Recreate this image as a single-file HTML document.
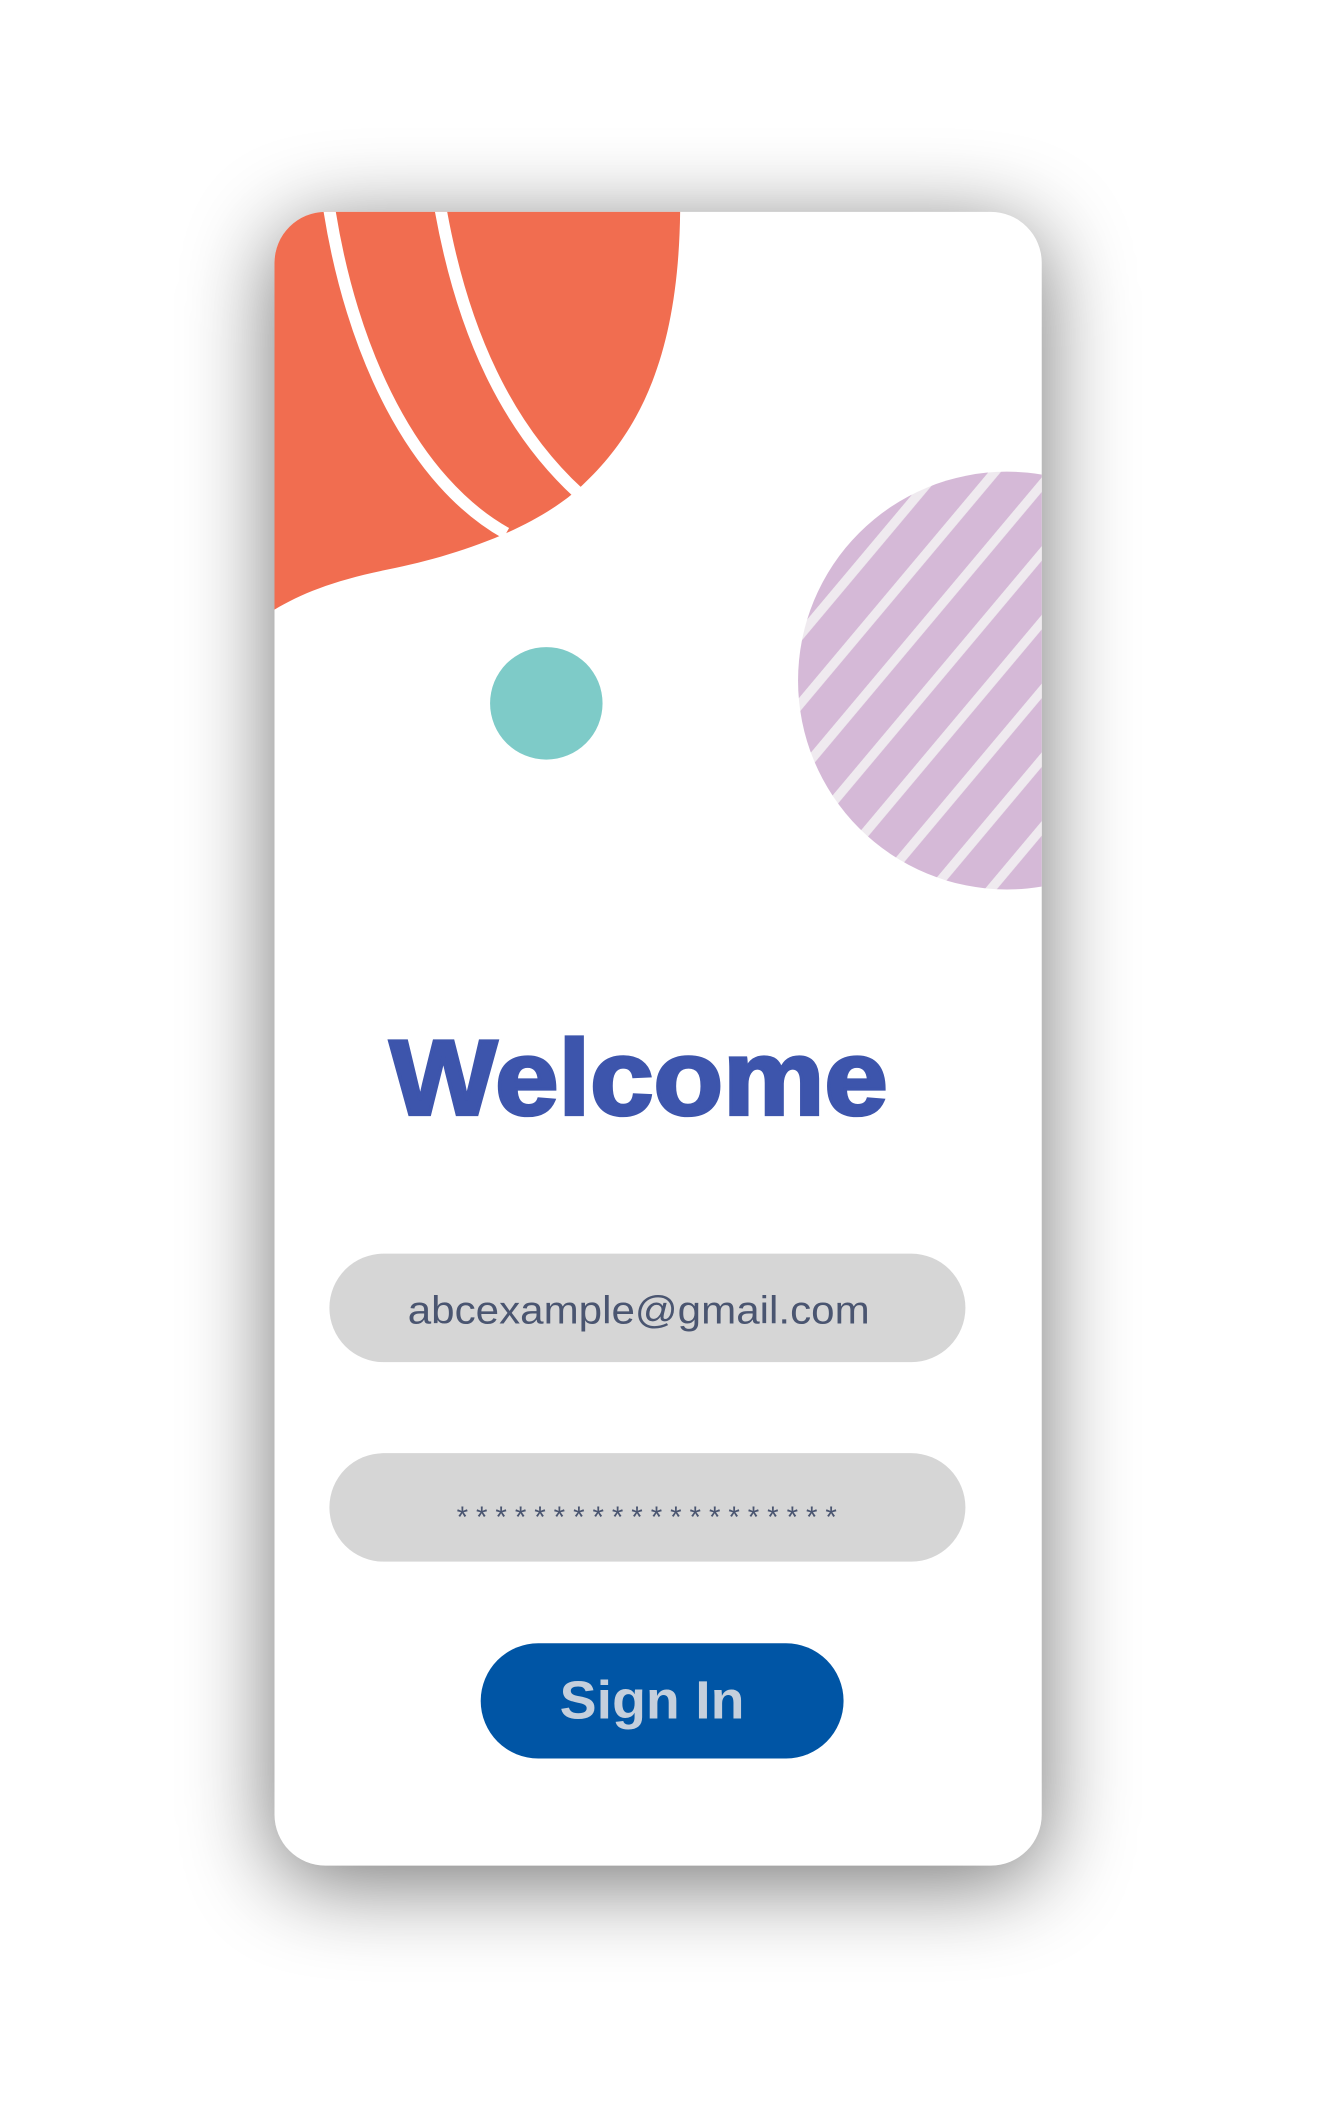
<!DOCTYPE html>
<html><head><meta charset="utf-8"><style>html,body{margin:0;padding:0;background:#fff;}svg{display:block;}</style></head>
<body>
<svg width="1339" height="2119" viewBox="0 0 1000 1582" xmlns="http://www.w3.org/2000/svg">
<defs>
<filter id="sh" x="-50%" y="-50%" width="200%" height="200%"><feGaussianBlur stdDeviation="34"/></filter>
<clipPath id="card"><rect x="205" y="158" width="573" height="1235" rx="38"/></clipPath>
<pattern id="stripes" patternUnits="userSpaceOnUse" width="33" height="33" patternTransform="rotate(40)">
<rect width="33" height="33" fill="#d5b9d7"/><rect x="0" width="7" height="33" fill="#efeaef"/>
</pattern>
</defs>
<rect x="205" y="170" width="573" height="1235" rx="38" fill="#000" opacity="0.55" filter="url(#sh)"/>
<rect x="205" y="158" width="573" height="1235" rx="38" fill="#fff"/>
<g clip-path="url(#card)">
<path d="M205,150 H508 C508,260 480,320 435,362 C400,395 340,415 290,425 C250,433 225,443 205,455 Z" fill="#f16d50"/>
<path d="M245,150 C262,265 310,360 378,398" fill="none" stroke="#fff" stroke-width="9"/>
<path d="M328,150 C345,250 380,320 432,368" fill="none" stroke="#fff" stroke-width="9"/>
<circle cx="752" cy="508" r="156" fill="url(#stripes)"/>
</g>
<circle cx="408" cy="525" r="42" fill="#7ecbc8"/>
<text x="477" y="832" text-anchor="middle" font-family="Liberation Sans, sans-serif" font-weight="bold" font-size="80" fill="#3d55ac" stroke="#3d55ac" stroke-width="2.5" textLength="372" lengthAdjust="spacingAndGlyphs">Welcome</text>
<rect x="246" y="936" width="475" height="81" rx="40.5" fill="#d6d6d6"/>
<text x="477" y="988" text-anchor="middle" font-family="Liberation Sans, sans-serif" font-size="29" fill="#4a5570" textLength="345" lengthAdjust="spacingAndGlyphs">abcexample@gmail.com</text>
<rect x="246" y="1085" width="475" height="81" rx="40.5" fill="#d6d6d6"/>
<text x="483" y="1140" text-anchor="middle" font-family="Liberation Sans, sans-serif" font-size="22" fill="#4a5570" textLength="284" lengthAdjust="spacing">********************</text>
<rect x="359" y="1227" width="271" height="86" rx="43" fill="#0055a5"/>
<text x="487" y="1283" text-anchor="middle" font-family="Liberation Sans, sans-serif" font-weight="bold" font-size="40" fill="#c5cfdc" textLength="138" lengthAdjust="spacingAndGlyphs">Sign In</text>
</svg>
</body></html>
